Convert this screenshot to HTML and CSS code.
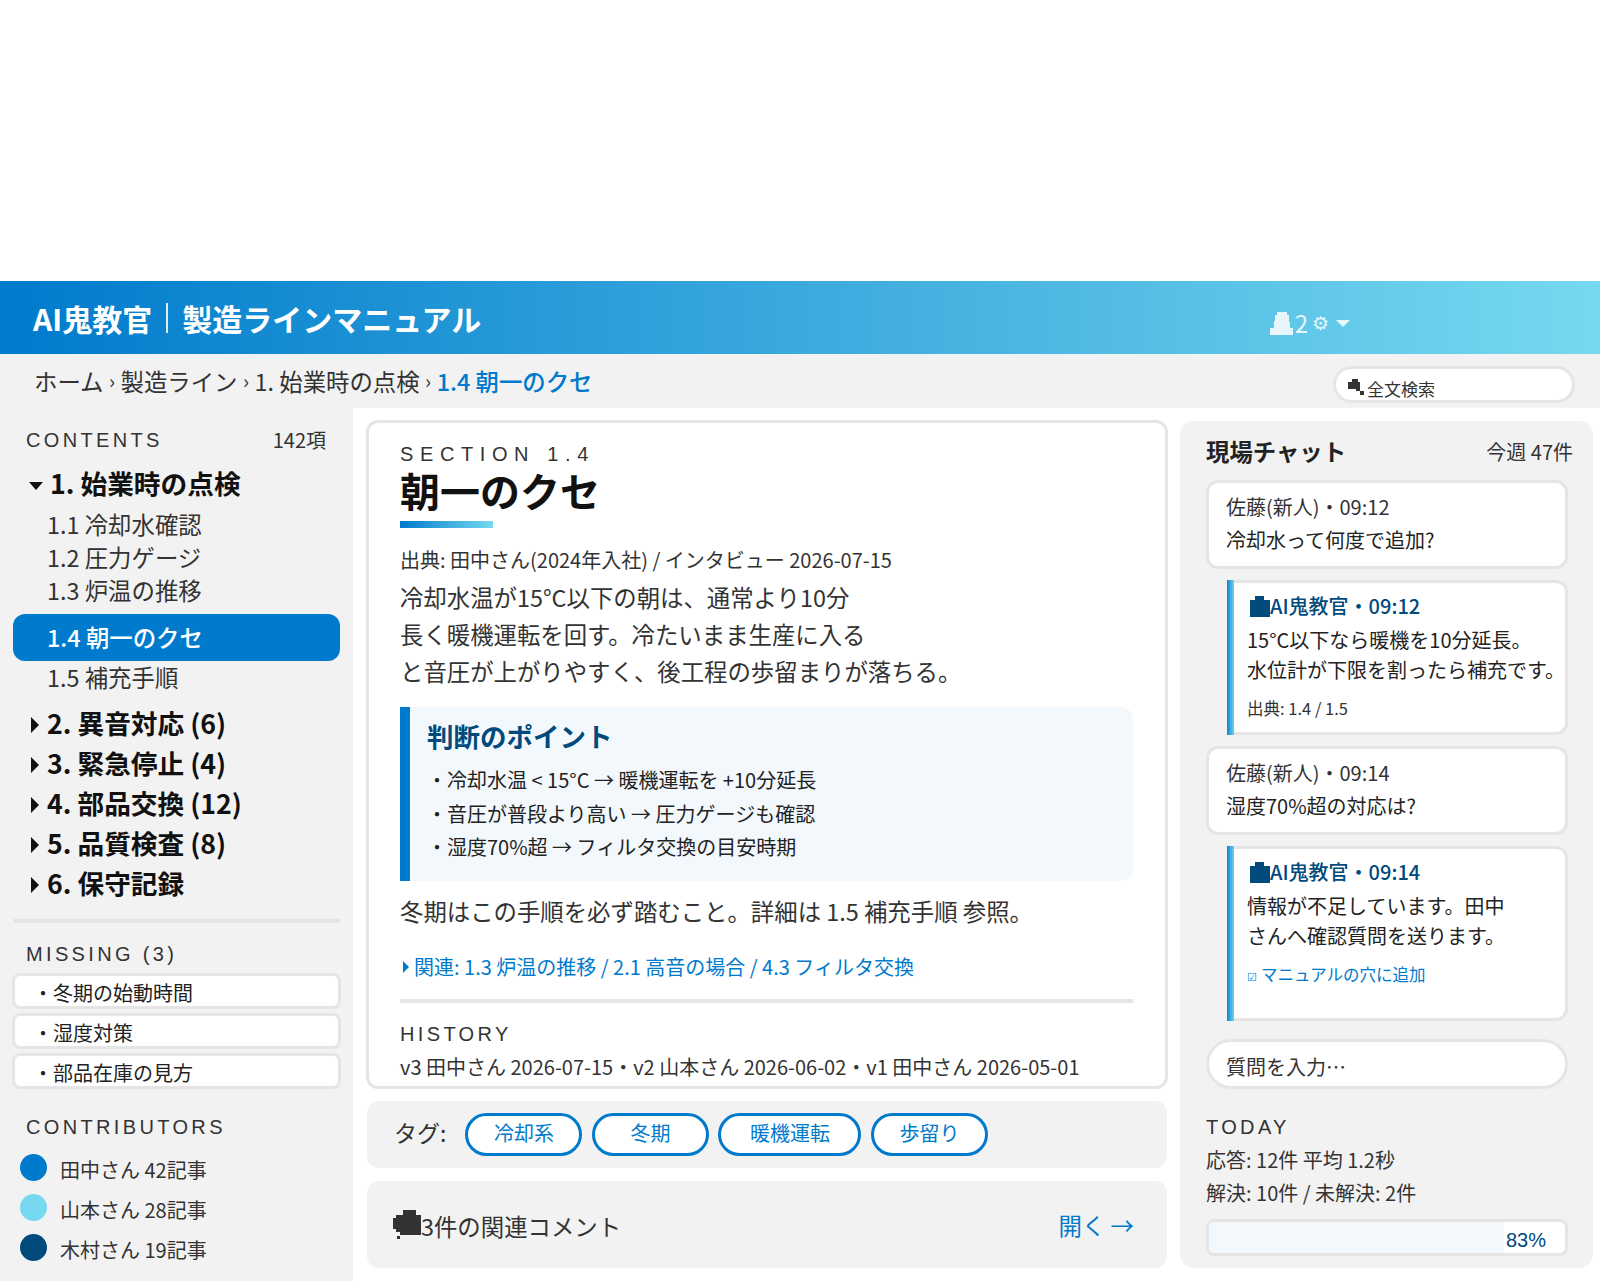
FILE: index.html
```html
<!DOCTYPE html>
<html lang="ja">
<head>
  <meta charset="UTF-8" />
  <title>AI鬼教官 製造ラインマニュアル</title>
  <link rel="stylesheet" href="styles.css">
</head>
<body>

  <div class="top-space"></div>

  <!-- ヘッダー -->
  <header class="header">
    <div class="brand">AI鬼教官</div>
    <div class="brand-sub">製造ラインマニュアル</div>
    <div class="header-tools">
      <svg class="bell" viewBox="0 0 23 23" shape-rendering="crispEdges"><path d="M7 0h10v3h2l1 13h3v7H0v-7h4L5 3h2z"/></svg>
      <span class="count">2</span>
      <span class="gear">⚙</span>
      <span class="caret"></span>
    </div>
  </header>

  <div class="crumbs">
    <div class="crumb-path">
      <span>ホーム</span><i>›</i><span>製造ライン</span><i>›</i><span>1. 始業時の点検</span><i>›</i><b>1.4 朝一のクセ</b>
    </div>
    <div class="search">
      <svg class="search-icon" viewBox="0 0 17 16" shape-rendering="crispEdges"><path d="M5 0h6v3h2v9H9v-2H1V3h4z"/><path d="M13 12h4v4h-4z"/></svg>
      <span>全文検索</span>
    </div>
  </div>

  <div class="layout">

    <!-- 目次 -->
    <aside class="sidebar">
      <div class="side-head"><span class="label">CONTENTS</span><span class="side-count">142項</span></div>

      <div class="group group-open"><span class="tri-down"></span>1. 始業時の点検</div>
      <div class="sub first">1.1 冷却水確認</div>
      <div class="sub">1.2 圧力ゲージ</div>
      <div class="sub">1.3 炉温の推移</div>
      <div class="sub active">1.4 朝一のクセ</div>
      <div class="sub after-active">1.5 補充手順</div>

      <div class="group group-first"><span class="tri-right"></span>2. 異音対応 (6)</div>
      <div class="group"><span class="tri-right"></span>3. 緊急停止 (4)</div>
      <div class="group"><span class="tri-right"></span>4. 部品交換 (12)</div>
      <div class="group"><span class="tri-right"></span>5. 品質検査 (8)</div>
      <div class="group"><span class="tri-right"></span>6. 保守記録</div>

      <div class="side-rule"></div>

      <div class="label missing-label">MISSING (3)</div>
      <div class="missing">・冬期の始動時間</div>
      <div class="missing">・湿度対策</div>
      <div class="missing">・部品在庫の見方</div>

      <div class="label contrib-label">CONTRIBUTORS</div>
      <div class="contrib"><span class="dot dot-blue"></span>田中さん 42記事</div>
      <div class="contrib"><span class="dot dot-light"></span>山本さん 28記事</div>
      <div class="contrib"><span class="dot dot-dark"></span>木村さん 19記事</div>
    </aside>

    <!-- 本文 -->
    <main class="center">
      <article class="card">
        <div class="section-no">SECTION 1.4</div>
        <h1 class="title">朝一のクセ</h1>
        <div class="title-bar"></div>
        <p class="source">出典: 田中さん(2024年入社) / インタビュー 2026-07-15</p>
        <p class="body-text">冷却水温が15°C以下の朝は、通常より10分<br>長く暖機運転を回す。冷たいまま生産に入る<br>と音圧が上がりやすく、後工程の歩留まりが落ちる。</p>

        <div class="point">
          <h2>判断のポイント</h2>
          <ul>
            <li>・冷却水温 &lt; 15°C → 暖機運転を +10分延長</li>
            <li>・音圧が普段より高い → 圧力ゲージも確認</li>
            <li>・湿度70%超 → フィルタ交換の目安時期</li>
          </ul>
        </div>

        <p class="body-text note">冬期はこの手順を必ず踏むこと。詳細は 1.5 補充手順 参照。</p>
        <div class="related"><span class="tri-small"></span>関連: 1.3 炉温の推移 / 2.1 高音の場合 / 4.3 フィルタ交換</div>
        <div class="card-rule"></div>
        <div class="label history-label">HISTORY</div>
        <div class="history">v3 田中さん 2026-07-15・v2 山本さん 2026-06-02・v1 田中さん 2026-05-01</div>
      </article>

      <div class="tags">
        <span class="tags-label">タグ:</span>
        <span class="tag">冷却系</span>
        <span class="tag">冬期</span>
        <span class="tag tag-wide">暖機運転</span>
        <span class="tag">歩留り</span>
      </div>

      <div class="comments">
        <svg class="comment-icon" viewBox="0 0 28 29" shape-rendering="crispEdges"><path d="M10 0h13v5h5v20H7v-3H3v-3H0V8h3V5h7z"/><path d="M4 26h3v3H4z"/></svg>
        <span class="comments-text">3件の関連コメント</span>
        <span class="comments-open">開く →</span>
      </div>
    </main>

    <!-- チャット -->
    <aside class="chat">
      <div class="chat-head"><strong>現場チャット</strong><span>今週 47件</span></div>

      <div class="bubble user">
        <div class="who">佐藤(新人)・09:12</div>
        <div class="msg">冷却水って何度で追加?</div>
      </div>

      <div class="bubble ai ai-one">
        <div class="who-ai">
          <svg class="bot" viewBox="0 0 20 21" shape-rendering="crispEdges"><path d="M5 0h9v4h6v17H0V4h5z"/></svg>AI鬼教官・09:12
        </div>
        <div class="msg-ai">15°C以下なら暖機を10分延長。<br>水位計が下限を割ったら補充です。</div>
        <div class="cite">出典: 1.4 / 1.5</div>
      </div>

      <div class="bubble user">
        <div class="who">佐藤(新人)・09:14</div>
        <div class="msg">湿度70%超の対応は?</div>
      </div>

      <div class="bubble ai ai-two">
        <div class="who-ai">
          <svg class="bot" viewBox="0 0 20 21" shape-rendering="crispEdges"><path d="M5 0h9v4h6v17H0V4h5z"/></svg>AI鬼教官・09:14
        </div>
        <div class="msg-ai">情報が不足しています。田中<br>さんへ確認質問を送ります。</div>
        <div class="add-hole"><span class="check">☑</span>マニュアルの穴に追加</div>
      </div>

      <div class="chat-input">質問を入力…</div>

      <div class="label today-label">TODAY</div>
      <div class="today today-first">応答: 12件 平均 1.2秒</div>
      <div class="today">解決: 10件 / 未解決: 2件</div>
      <div class="meter">
        <div class="meter-fill" style="width: 83%"></div>
        <span>83%</span>
      </div>
    </aside>
  </div>

</body>
</html>
```

FILE: styles.css
```css
* {
  box-sizing: border-box;
}

body {
  margin: 0;
  padding: 0;
  background: #fff;
  color: #333;
  font-family: "Noto Sans CJK JP", "Noto Sans", sans-serif;
}

.top-space {
  height: 281px;
}

/* ヘッダー */
.header {
  display: flex;
  align-items: center;
  height: 73px;
  padding: 0 250px 0 33px;
  background: linear-gradient(90deg, #007acc 0%, #76d9ef 100%);
  color: #fff;
}

.brand, .brand-sub {
  font-size: 30px;
  font-weight: 700;
  line-height: 40px;
}

.brand {
  padding-right: 14px;
  border-right: 2px solid rgba(255, 255, 255, 0.85);
  line-height: 30px;
}

.brand-sub {
  margin-left: 14px;
}

.header-tools {
  display: flex;
  align-items: center;
  margin-left: auto;
  color: #e8f6fc;
  padding-top: 11px;
}

.bell {
  width: 23px;
  height: 23px;
  fill: #e8f6fc;
}

.count {
  font-size: 24px;
  line-height: 30px;
  margin-left: 2px;
}

.gear {
  font-size: 19px;
  margin-left: 4px;
  font-family: "DejaVu Sans", sans-serif;
}

.caret {
  width: 0;
  height: 0;
  margin-left: 7px;
  border-left: 7px solid transparent;
  border-right: 7px solid transparent;
  border-top: 7px solid #e8f6fc;
}

/* パンくず */
.crumbs {
  display: flex;
  align-items: center;
  justify-content: space-between;
  height: 54px;
  padding: 0 25px 0 34px;
  background: #f2f2f2;
}

.crumb-path {
  display: flex;
  align-items: center;
  font-size: 23.4px;
  line-height: 34px;
}

.crumb-path i {
  font-style: normal;
  font-size: 20px;
  margin: 0 5.5px;
}

.crumb-path b {
  font-weight: 500;
  color: #007acc;
}

.search {
  display: flex;
  align-items: flex-end;
  width: 242px;
  height: 37px;
  margin-top: 7px;
  padding: 0 0 0 11px;
  background: #fff;
  border: 3px solid #e5e5e5;
  border-radius: 19px;
  overflow: hidden;
  font-size: 17px;
  line-height: 22px;
}

.search-icon {
  width: 17px;
  height: 16px;
  fill: #333;
  margin-bottom: 5px;
  margin-right: 3px;
}

.layout {
  display: grid;
  grid-template-columns: 353px 827px 413px;
  height: 873px;
}

/* 目次 */
.sidebar {
  background: #f2f2f2;
  padding: 19px 13px 0;
  height: 873px;
}

.label {
  font-family: "Liberation Sans", sans-serif;
  font-size: 20px;
  line-height: 26px;
  letter-spacing: 3.35px;
  color: #333;
}

.side-head {
  display: flex;
  justify-content: space-between;
  padding: 0 14px 0 13px;
}

.side-count {
  font-size: 20px;
  line-height: 26px;
}

.group {
  display: flex;
  align-items: center;
  height: 40px;
  padding: 0 0 4px 20px;
  font-size: 26.7px;
  font-weight: 700;
  color: #111;
}

.group-open {
  height: 38px;
  margin-top: 13px;
  padding: 0 0 6px 16px;
}

.group-first {
  margin-top: 8px;
}

.tri-down {
  width: 0;
  height: 0;
  margin: 7px 7px 0 0;
  border-left: 7px solid transparent;
  border-right: 7px solid transparent;
  border-top: 8px solid #111;
}

.tri-right {
  width: 0;
  height: 0;
  margin: 5px 8px 0 -2px;
  border-top: 8px solid transparent;
  border-bottom: 8px solid transparent;
  border-left: 8px solid #111;
}

.sub {
  height: 33px;
  padding-left: 34px;
  font-size: 23.4px;
  line-height: 29px;
}

.sub.first {
  margin-top: 6px;
}

.sub.active {
  height: 47px;
  margin-top: 5px;
  line-height: 47px;
  background: #007acc;
  border-radius: 12px;
  color: #fff;
  font-weight: 500;
}

.sub.after-active {
  margin-top: 2px;
}

.side-rule {
  height: 4px;
  margin-top: 15px;
  background: #e5e5e5;
}

.missing-label {
  margin: 18px 0 6px 13px;
}

.missing {
  height: 36px;
  margin: 0 -1px 4px;
  padding-left: 18px;
  background: #fff;
  border: 3px solid #e5e5e5;
  border-radius: 8px;
  font-size: 20px;
  line-height: 34px;
  overflow: hidden;
  color: #222;
}

.contrib-label {
  margin: 25px 0 8px 13px;
}

.contrib {
  display: flex;
  align-items: center;
  height: 40px;
  font-size: 20px;
  padding: 3px 0 0 7px;
}

.dot {
  width: 27px;
  height: 27px;
  border-radius: 50%;
  margin-right: 13px;
  margin-top: -4px;
}

.dot-blue { background: #007acc; }
.dot-light { background: #76d9ef; }
.dot-dark { background: #004a7c; }

/* 本文 */
.center {
  padding: 12px 12px 0 13px;
}

.card {
  height: 669px;
  padding: 20px 32px 0 31px;
  background: #fff;
  border: 3px solid #e5e5e5;
  border-radius: 12px;
}

.section-no {
  font-family: "Liberation Sans", sans-serif;
  font-size: 20px;
  line-height: 22px;
  letter-spacing: 6.6px;
}

.title {
  margin: 0;
  font-size: 40px;
  font-weight: 700;
  line-height: 50px;
  color: #111;
}

.title-bar {
  width: 93px;
  height: 7px;
  margin-top: 6px;
  background: linear-gradient(90deg, #007acc, #76d9ef);
}

.source {
  margin: 17px 0 0;
  font-size: 20px;
  line-height: 30px;
}

.body-text {
  margin: 4px 0 0;
  font-size: 23.4px;
  line-height: 37px;
}

.point {
  height: 174px;
  margin-top: 17px;
  padding: 10px 20px 0 17px;
  background: #f3f8fc;
  border-left: 10px solid #007acc;
  border-radius: 0 12px 12px 0;
}

.point h2 {
  margin: 0;
  font-size: 26.5px;
  font-weight: 700;
  line-height: 38px;
  color: #004a7c;
}

.point ul {
  margin: 8px 0 0;
  padding: 0;
  list-style: none;
  font-size: 20px;
  line-height: 33.5px;
  color: #222;
}

.note {
  margin-top: 12px;
}

.related {
  display: flex;
  align-items: center;
  margin-top: 20px;
  font-size: 20px;
  line-height: 34px;
  color: #007acc;
}

.tri-small {
  width: 0;
  height: 0;
  margin: 0 5px 0 3px;
  border-top: 6px solid transparent;
  border-bottom: 6px solid transparent;
  border-left: 6px solid #007acc;
}

.card-rule {
  height: 4px;
  margin-top: 15px;
  background: #e5e5e5;
}

.history-label {
  margin-top: 18px;
}

.history {
  margin-top: 5px;
  font-size: 20px;
  line-height: 30px;
}

.tags {
  display: flex;
  align-items: center;
  gap: 9.5px;
  height: 67px;
  margin: 12px 1px 0;
  padding: 0 27px;
  background: #f2f2f2;
  border-radius: 12px;
}

.tags-label {
  margin: -6px 9.5px 0 0;
  font-size: 23px;
}

.tag {
  min-width: 117px;
  height: 43px;
  padding: 0 24px;
  background: #fff;
  border: 3px solid #007acc;
  border-radius: 22px;
  font-size: 20px;
  line-height: 33px;
  color: #007acc;
  text-align: center;
}

.tag-wide {
  min-width: 143px;
}

.comments {
  display: flex;
  align-items: center;
  height: 87px;
  margin: 13px 1px 0;
  padding: 0 33px 0 26px;
  background: #f2f2f2;
  border-radius: 12px;
}

.comment-icon {
  width: 28px;
  height: 29px;
  fill: #333;
}

.comments-text {
  font-size: 23.4px;
  padding-top: 2px;
}

.comments-open {
  margin-left: auto;
  font-size: 23.4px;
  color: #007acc;
}

/* チャット */
.chat {
  margin-top: 13px;
  height: 847px;
  padding: 15px 25px 0 26px;
  background: #f2f2f2;
  border-radius: 14px;
}

.chat-head {
  display: flex;
  justify-content: space-between;
  height: 35px;
  margin-right: -5px;
  font-size: 20px;
  line-height: 31px;
}

.chat-head strong {
  font-size: 23.4px;
  color: #222;
}

.bubble {
  background: #fff;
  border: 3px solid #e5e5e5;
  border-radius: 12px;
}

.user {
  height: 89px;
  margin-top: 9px;
  padding: 7px 17px 0;
  font-size: 20px;
  line-height: 33px;
}

.user + .ai {
  margin-top: 11px;
}

.ai + .user {
  margin-top: 11px;
}

.msg {
  color: #222;
}

.ai {
  position: relative;
  margin-left: 21px;
  padding: 5px 0 0 20px;
  border-left: 0;
  border-radius: 0 12px 12px 0;
  white-space: nowrap;
}

/* 左の帯 */
.ai::before {
  content: "";
  position: absolute;
  left: 0;
  top: -3px;
  bottom: -3px;
  width: 7px;
  background: linear-gradient(90deg, #0a85d1, #6fd2ec);
}

.ai-one {
  height: 155px;
}

.ai-two {
  height: 175px;
  margin-top: 12px;
}

.who-ai {
  display: flex;
  align-items: center;
  font-size: 20px;
  font-weight: 500;
  line-height: 36px;
  color: #004a7c;
}

.bot {
  width: 20px;
  height: 21px;
  margin-left: 3px;
  fill: #004a7c;
}

.msg-ai {
  margin-top: 1px;
  font-size: 20px;
  line-height: 30px;
  color: #222;
}

.cite {
  margin-top: 9px;
  font-size: 16.5px;
  line-height: 28px;
}

.add-hole {
  margin-top: 9px;
  font-size: 16.5px;
  line-height: 28px;
  color: #007acc;
}

.check {
  font-size: 11px;
  margin-right: 4px;
}

.chat-input {
  height: 50px;
  margin-top: 18px;
  padding-left: 17px;
  background: #fff;
  border: 3px solid #e5e5e5;
  border-radius: 25px;
  font-size: 20px;
  line-height: 50px;
}

.today-label {
  margin-top: 25px;
}

.today {
  font-size: 20px;
  line-height: 33px;
}

.today-first {
  margin-top: 3px;
}

.meter {
  position: relative;
  height: 37px;
  margin-top: 10px;
  background: #fff;
  border: 3px solid #e5e5e5;
  border-radius: 8px;
  overflow: hidden;
}

.meter-fill {
  height: 100%;
  background: #f3f8fc;
}

.meter span {
  position: absolute;
  right: 19px;
  top: 5px;
  font-family: "Liberation Sans", sans-serif;
  font-size: 20px;
  line-height: 26px;
  color: #004a7c;
}
```
